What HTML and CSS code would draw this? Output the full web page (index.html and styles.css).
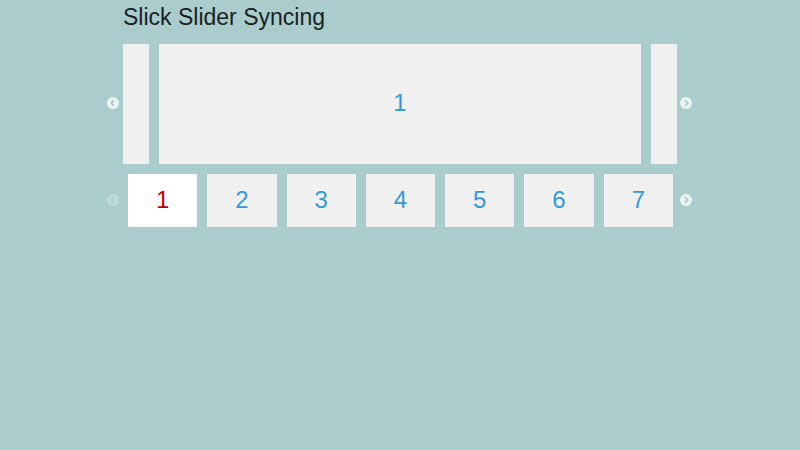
FILE: index.html
```html
<!DOCTYPE html>
<html>
<head>
<meta charset="utf-8">
<link rel="stylesheet" href="styles.css">
</head>
<body>
<div class="page">
  <h2 class="title">Slick Slider Syncing</h2>
  <div class="slider main">
    <button class="arrow prev"><svg viewBox="0 0 12 12"><circle cx="6" cy="6" r="6" fill="#fff"/><path d="M7 3.2 4.3 6 7 8.8" fill="none" stroke="#aacccc" stroke-width="1.8"/></svg></button>
    <div class="track">
      <div class="slide edge"></div>
      <div class="slide center">1</div>
      <div class="slide edge"></div>
    </div>
    <button class="arrow next"><svg viewBox="0 0 12 12"><circle cx="6" cy="6" r="6" fill="#fff"/><path d="M5 3.2 7.7 6 5 8.8" fill="none" stroke="#aacccc" stroke-width="1.8"/></svg></button>
  </div>
  <div class="slider nav">
    <button class="arrow prev disabled"><svg viewBox="0 0 12 12"><circle cx="6" cy="6" r="6" fill="#fff"/><path d="M7 3.2 4.3 6 7 8.8" fill="none" stroke="#aacccc" stroke-width="1.8"/></svg></button>
    <div class="thumbs">
      <div class="thumb active">1</div>
      <div class="thumb">2</div>
      <div class="thumb">3</div>
      <div class="thumb">4</div>
      <div class="thumb">5</div>
      <div class="thumb">6</div>
      <div class="thumb">7</div>
    </div>
    <button class="arrow next"><svg viewBox="0 0 12 12"><circle cx="6" cy="6" r="6" fill="#fff"/><path d="M5 3.2 7.7 6 5 8.8" fill="none" stroke="#aacccc" stroke-width="1.8"/></svg></button>
  </div>
</div>
</body>
</html>
```

FILE: styles.css
```css
html, body {
  margin: 0;
  padding: 0;
  background: #aacccc;
  font-family: "Liberation Sans", Arial, sans-serif;
}
.page {
  width: 554px;
  margin: 0 auto;
}
.title {
  margin: 0 0 10px 0;
  font-size: 23px;
  font-weight: normal;
  line-height: 34px;
  color: #1a1f24;
}
.slider {
  position: relative;
}
.track {
  display: flex;
  gap: 10px;
  height: 120px;
}
.slide {
  background: #f0f0f0;
  color: #3498db;
  font-size: 24px;
  display: flex;
  align-items: center;
  justify-content: center;
  padding-bottom: 2px;
  box-sizing: border-box;
}
.slide.edge {
  width: 26px;
  flex: none;
}
.slide.center {
  flex: 1;
}
.nav {
  margin-top: 10px;
}
.thumbs {
  display: flex;
  padding: 0 4px 0 5px;
  gap: 10px;
  height: 53px;
}
.thumb {
  flex: 1;
  background: #f0f0f0;
  color: #3498db;
  font-size: 24px;
  display: flex;
  align-items: center;
  justify-content: center;
  padding-bottom: 2px;
  box-sizing: border-box;
}
.thumb.active {
  background: #fff;
  color: #c00000;
}
.arrow {
  position: absolute;
  top: 50%;
  width: 12px;
  height: 12px;
  margin-top: -7px;
  padding: 0;
  border: 0;
  background: none;
  opacity: 0.8;
}
.arrow svg {
  display: block;
  width: 12px;
  height: 12px;
}
.arrow.prev {
  left: -16px;
}
.arrow.next {
  right: -15px;
}
.arrow.disabled {
  opacity: 0.25;
}
```
